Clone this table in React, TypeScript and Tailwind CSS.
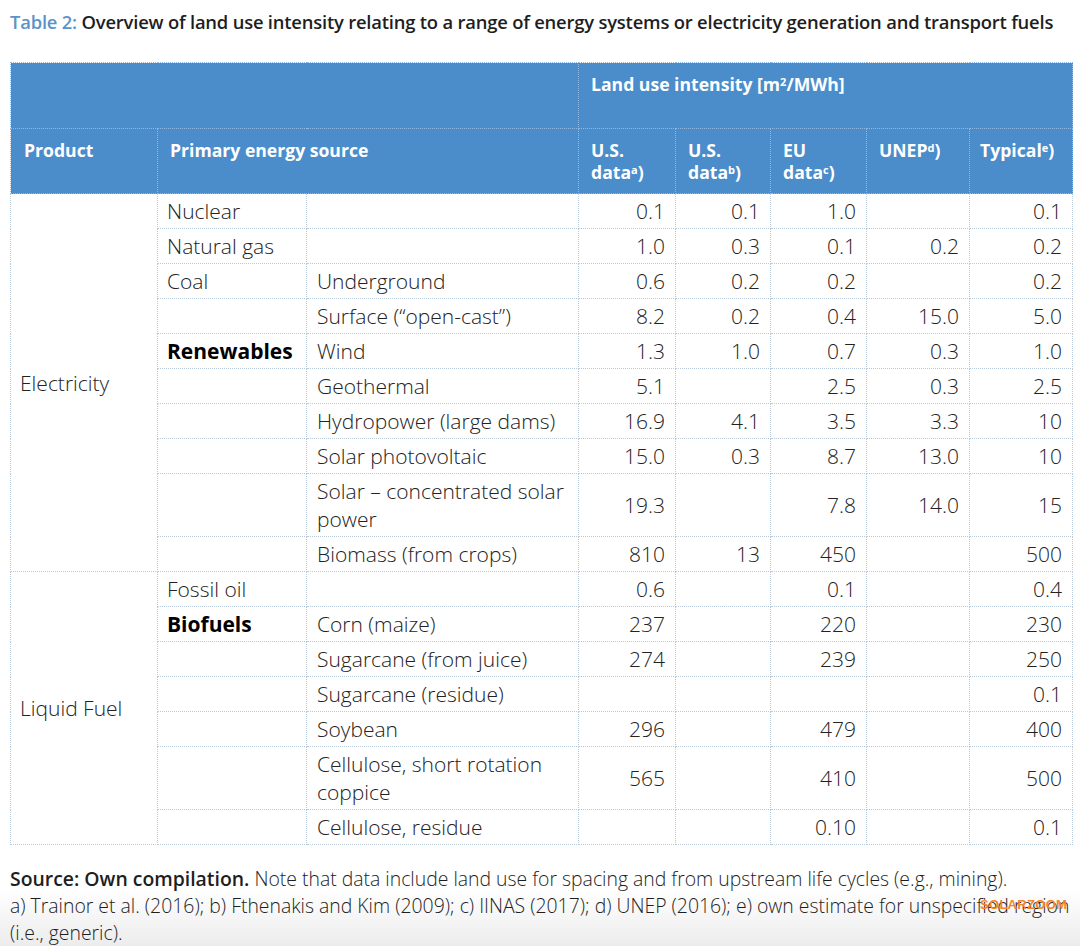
type Row = {
  product?: { text: string; span: number };
  primary?: string;
  primaryBold?: boolean;
  sub: string;
  vals: string[];
  tall?: boolean;
};

const rows: Row[] = [
  { product: { text: "Electricity", span: 10 }, primary: "Nuclear", sub: "", vals: ["0.1", "0.1", "1.0", "", "0.1"] },
  { primary: "Natural gas", sub: "", vals: ["1.0", "0.3", "0.1", "0.2", "0.2"] },
  { primary: "Coal", sub: "Underground", vals: ["0.6", "0.2", "0.2", "", "0.2"] },
  { primary: "", sub: "Surface (\u201copen-cast\u201d)", vals: ["8.2", "0.2", "0.4", "15.0", "5.0"] },
  { primary: "Renewables", primaryBold: true, sub: "Wind", vals: ["1.3", "1.0", "0.7", "0.3", "1.0"] },
  { primary: "", sub: "Geothermal", vals: ["5.1", "", "2.5", "0.3", "2.5"] },
  { primary: "", sub: "Hydropower (large dams)", vals: ["16.9", "4.1", "3.5", "3.3", "10"] },
  { primary: "", sub: "Solar photovoltaic", vals: ["15.0", "0.3", "8.7", "13.0", "10"] },
  { primary: "", sub: "Solar \u2013 concentrated solar power", vals: ["19.3", "", "7.8", "14.0", "15"], tall: true },
  { primary: "", sub: "Biomass (from crops)", vals: ["810", "13", "450", "", "500"] },
  { product: { text: "Liquid Fuel", span: 7 }, primary: "Fossil oil", sub: "", vals: ["0.6", "", "0.1", "", "0.4"] },
  { primary: "Biofuels", primaryBold: true, sub: "Corn (maize)", vals: ["237", "", "220", "", "230"] },
  { primary: "", sub: "Sugarcane (from juice)", vals: ["274", "", "239", "", "250"] },
  { primary: "", sub: "Sugarcane (residue)", vals: ["", "", "", "", "0.1"] },
  { primary: "", sub: "Soybean", vals: ["296", "", "479", "", "400"] },
  { primary: "", sub: "Cellulose, short rotation coppice", vals: ["565", "", "410", "", "500"], tall: true },
  { primary: "", sub: "Cellulose, residue", vals: ["", "", "0.10", "", "0.1"] },
];

const cell = "border border-dotted border-[#b9cadb] align-middle";
const head = "border border-dotted border-[#8fb8e2] align-top text-left";

export default function App() {
  return (
    <div
      className="w-[1080px] h-[946px] bg-gradient-to-b from-white from-[94%] to-[#ececec] text-[#1e1e1e] overflow-hidden"
      style={{ fontFamily: '"Open Sans", "Liberation Sans", sans-serif' }}
    >
      <h1 className="pl-[10px] pt-[8px] text-[18.4px] leading-[28px] font-semibold tracking-[-0.2px] whitespace-nowrap">
        <span className="text-[#5b93c8]">Table 2:</span> Overview of land use intensity relating to a range of energy systems or electricity generation and transport fuels
      </h1>

      <table className="ml-[10px] mt-[26px] w-[1062px] table-fixed border-collapse">
        <colgroup>
          <col className="w-[147px]" />
          <col className="w-[149px]" />
          <col className="w-[272px]" />
          <col className="w-[97px]" />
          <col className="w-[95px]" />
          <col className="w-[96px]" />
          <col className="w-[103px]" />
          <col className="w-[103px]" />
        </colgroup>
        <thead className="bg-[#4b8dcb] text-white text-[17.6px] leading-[22px] font-bold">
          <tr className="h-[66px]">
            <th className={head} colSpan={3} />
            <th className={`${head} pl-[12px] pt-[10px]`} colSpan={5}>
              Land use intensity [m<sup className="text-[11px]">2</sup>/MWh]
            </th>
          </tr>
          <tr className="h-[65px]">
            <th className={`${head} pl-[13px] pt-[10px]`}>Product</th>
            <th className={`${head} pl-[12px] pt-[10px]`} colSpan={2}>Primary energy source</th>
            <th className={`${head} pl-[12px] pt-[10px]`}>U.S.<br />data<sup className="text-[11px]">a</sup>)</th>
            <th className={`${head} pl-[12px] pt-[10px]`}>U.S.<br />data<sup className="text-[11px]">b</sup>)</th>
            <th className={`${head} pl-[12px] pt-[10px]`}>EU<br />data<sup className="text-[11px]">c</sup>)</th>
            <th className={`${head} pl-[12px] pt-[10px]`}>UNEP<sup className="text-[11px]">d</sup>)</th>
            <th className={`${head} pl-[10px] pt-[10px]`}>Typical<sup className="text-[11px]">e</sup>)</th>
          </tr>
        </thead>
        <tbody className="text-[21px] leading-[28px] font-light text-[#222]">
          {rows.map((r, i) => (
            <tr key={i} className={r.tall ? "h-[63px]" : "h-[35px]"}>
              {r.product && (
                <td className={`${cell} pl-[9px]`} rowSpan={r.product.span}>
                  {r.product.text}
                </td>
              )}
              <td className={`${cell} pl-[9px] ${r.primaryBold ? "font-bold text-black" : ""}`}>{r.primary}</td>
              <td className={`${cell} pl-[10px] pr-[4px]`}>{r.sub}</td>
              {r.vals.map((v, j) => (
                <td key={j} className={`${cell} text-right pr-[10px]`}>
                  {v}
                </td>
              ))}
            </tr>
          ))}
        </tbody>
      </table>

      <div className="relative pl-[10px] pt-[20px] text-[19.4px] leading-[27px] font-light text-[#1e1e1e] whitespace-nowrap">
        <p>
          <span className="font-semibold">Source: Own compilation.</span> Note that data include land use for spacing and from upstream life cycles (e.g., mining).
        </p>
        <p>
          a) Trainor et al. (2016); b) Fthenakis and Kim (2009); c) IINAS (2017); d) UNEP (2016); e) own estimate for unspecified region
        </p>
        <p>(i.e., generic).</p>
        <span
          className="absolute left-[980px] top-[53px] text-[13px] leading-[14px] font-bold tracking-[0.3px] text-[#f2862a]"
          style={{ fontFamily: '"Liberation Sans", sans-serif' }}
        >
          SOLARZOOM
        </span>
      </div>
    </div>
  );
}
